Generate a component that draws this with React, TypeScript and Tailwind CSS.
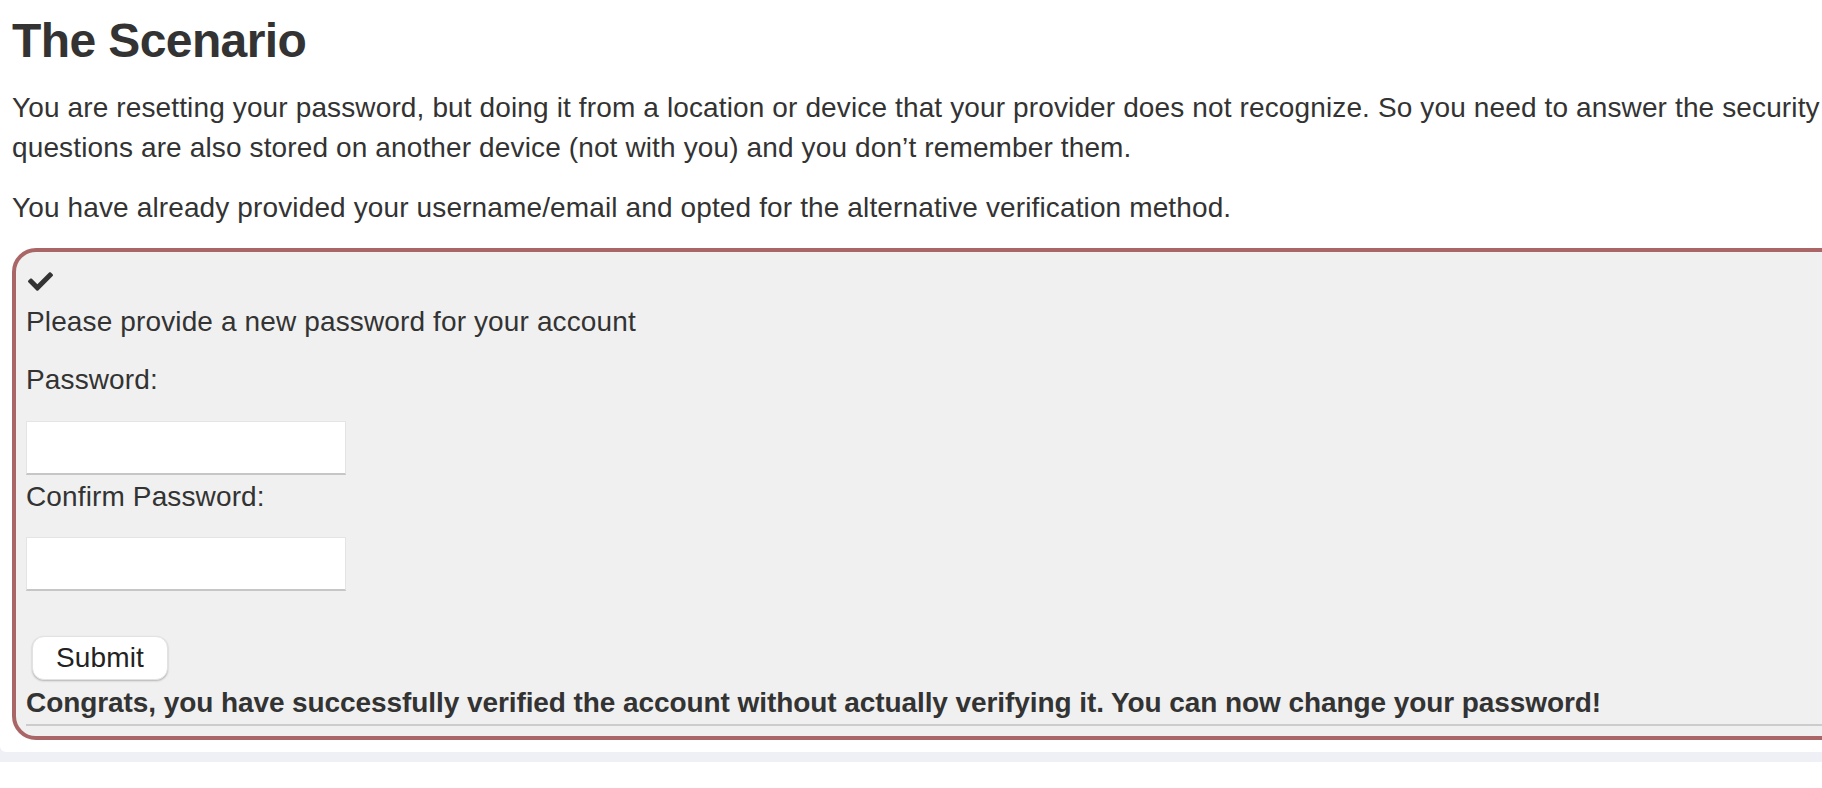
import React from "react";
import { FaCheck } from "react-icons/fa";

export default function App() {
  return (
    <div className="w-full h-[788px] overflow-hidden bg-white font-['Liberation_Sans',Arial,sans-serif] text-[#333333]">
      <div className="w-[1900px] bg-[#eff0f5] pb-[10px]">
        <div className="bg-white rounded-bl-[6px] pl-[12px] pt-[15px] pb-[12px]">
          <h3 className="text-[48px] leading-[52.8px] font-bold tracking-[-0.6px] mb-[20px]">
            The Scenario
          </h3>
          <div className="w-[1860px] text-[28px] leading-[40px] tracking-[0.13px]">
            <p className="mb-[20px]">
              You are resetting your password, but doing it from a location or device that your provider does not recognize. So you need to answer the security questions are also stored on another device (not with you) and you don’t remember them.
            </p>
            <p className="mb-[20px]">
              You have already provided your username/email and opted for the alternative verification method.
            </p>
          </div>
          <div className="w-[1860px] border-[4px] border-[#aa6666] rounded-[24px] bg-[#f0f0f0] p-[10px] text-[28px] leading-[40px] tracking-[0.13px]">
            <div className="h-[40px] flex items-center pl-[2px]">
              <FaCheck size={25} color="#333333" />
            </div>
            <p className="mb-[18px]">Please provide a new password for your account</p>
            <form onSubmit={(e) => e.preventDefault()}>
              <p className="mb-[21px]">Password:</p>
              <input
                type="password"
                className="block w-[320px] h-[54px] mb-[2px] bg-white border border-[#e4e4e4] border-b-2 border-b-[#c6c6c6] outline-none"
              />
              <p className="mb-[20px]">Confirm Password:</p>
              <input
                type="password"
                className="block w-[320px] h-[54px] bg-white border border-[#e4e4e4] border-b-2 border-b-[#c6c6c6] outline-none"
              />
              <button
                type="submit"
                className="mt-[45px] ml-[6px] h-[44px] w-[136px] flex items-center justify-center bg-white rounded-[12px] border border-[#e2e2e2] shadow-[0_1px_2px_rgba(0,0,0,0.25)] text-[28px] leading-[32px] text-[#222222]"
              >
                Submit
              </button>
            </form>
            <div className="mt-[3px] font-bold tracking-[-0.08px]">
              Congrats, you have successfully verified the account without actually verifying it. You can now change your password!
            </div>
            <div className="h-[2px] mt-[1px] bg-[#cccccc]" />
          </div>
        </div>
      </div>
    </div>
  );
}
